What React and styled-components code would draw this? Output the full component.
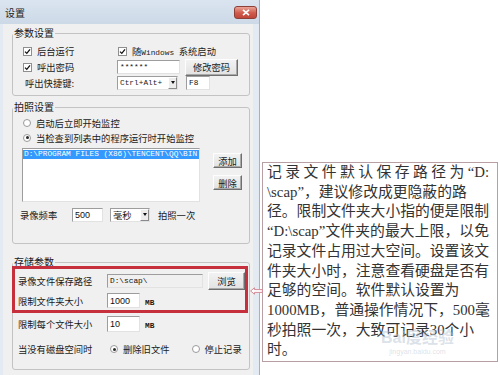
import React from 'react';
import styled, { createGlobalStyle } from 'styled-components';

const Global = createGlobalStyle`
  html, body { margin: 0; padding: 0; background: #fff; }
  body { width: 500px; height: 375px; overflow: hidden; font-family: "Noto Sans CJK SC", sans-serif; }
`;

const Page = styled.div`
  position: relative;
  display: flex;
  align-items: flex-start;
  width: 500px;
  height: 375px;
  background: #fff;
  overflow: hidden;
`;

const Window = styled.div`
  flex: none;
  width: 260px;
  height: 375px;
  box-sizing: border-box;
  display: flex;
  flex-direction: column;
  background: #e3eaf2;
  border-right: 1px solid #8dbad8;
`;

const TitleBar = styled.div`
  height: 24px;
  flex: none;
  display: flex;
  align-items: center;
  justify-content: space-between;
  padding: 0 2px 0 5px;
  background: linear-gradient(#dbe5f0, #ccd9e7);
  font-size: 10px;
  color: #1e1e1e;
`;

const CloseButton = styled.div`
  width: 23px;
  height: 13px;
  box-sizing: border-box;
  border: 1px solid #8e3f38;
  border-radius: 3px;
  background: linear-gradient(#e9a497, #cf5a4a 55%, #c0463a);
  display: flex;
  align-items: center;
  justify-content: center;
`;

const Body = styled.div`
  flex: 1;
  margin: 0 6px 0 3px;
  padding: 0 3px 0 9px;
  background: #f0f0f0;
  display: flex;
  flex-direction: column;
  font-size: 9.3px;
  color: #1a1a1a;
`;

const Group = styled.fieldset`
  margin: ${p => p.$mt}px 0 0;
  padding: 0;
  border: 1px solid #c3c3c3;
  border-radius: 3px;
  min-width: 0;
`;

const Legend = styled.legend`
  margin-left: 0;
  padding: 0 1px;
  font-size: 10px;
  line-height: 12px;
  color: #1a1a1a;
`;

const GroupContent = styled.div`
  position: relative;
  display: flex;
  flex-direction: column;
  padding: ${p => p.$pad};
`;

const Row = styled.div`
  display: flex;
  align-items: center;
  height: ${p => p.$h}px;
  margin-top: ${p => p.$mt || 0}px;
  padding-left: ${p => p.$pl || 0}px;
`;

const Cell = styled.div`
  flex: none;
  width: ${p => p.$w}px;
  display: flex;
  align-items: center;
  white-space: nowrap;
`;

const Option = styled.label`
  display: flex;
  align-items: center;
  gap: 5px;
  white-space: nowrap;
  margin-left: ${p => p.$ml || 0}px;
`;

const Box = styled.span`
  flex: none;
  width: 9px;
  height: 9px;
  box-sizing: border-box;
  border: 1px solid #8e8f8f;
  background: #fff;
  display: flex;
  align-items: center;
  justify-content: center;
`;

const Circle = styled.span`
  flex: none;
  width: 8px;
  height: 8px;
  box-sizing: border-box;
  border: 1px solid #9a9a9a;
  border-radius: 50%;
  background: #fff;
  display: flex;
  align-items: center;
  justify-content: center;
  &::after {
    content: "";
    display: ${p => (p.$on ? 'block' : 'none')};
    width: 3px;
    height: 3px;
    border-radius: 50%;
    background: #2a2a2a;
  }
`;

const Mono = styled.span`
  font-family: "Liberation Mono", monospace;
  font-size: 7.8px;
  font-weight: ${p => (p.$bold ? 700 : 400)};
`;

const Field = styled.div`
  flex: none;
  width: ${p => p.$w}px;
  height: ${p => p.$h || 14}px;
  box-sizing: border-box;
  margin-left: ${p => p.$ml || 0}px;
  padding: 0 2px;
  background: ${p => (p.$ro ? '#f0f0f0' : '#fff')};
  border: 1px solid;
  border-color: #9d9d9d #e2e2e2 #e2e2e2 #9d9d9d;
  display: flex;
  align-items: center;
  overflow: hidden;
  white-space: nowrap;
  font-family: ${p => (p.$mono ? '"Liberation Mono", monospace' : '"Liberation Sans", sans-serif')};
  font-size: ${p => (p.$mono ? '7.8px' : '9px')};
  color: #111;
`;

const Select = styled.div`
  flex: none;
  width: ${p => p.$w}px;
  height: 14px;
  box-sizing: border-box;
  margin-left: ${p => p.$ml || 0}px;
  background: #fff;
  border: 1px solid;
  border-color: #9d9d9d #e2e2e2 #e2e2e2 #9d9d9d;
  display: flex;
  align-items: center;
  justify-content: space-between;
  padding-left: 2px;
  white-space: nowrap;
  font-size: 9.3px;
`;

const SelectArrow = styled.span`
  flex: none;
  width: 9px;
  height: 12px;
  box-sizing: border-box;
  background: #ececec;
  border: 1px solid;
  border-color: #fff #8a8a8a #8a8a8a #fff;
  display: flex;
  align-items: center;
  justify-content: center;
  &::after {
    content: "";
    border-left: 2.5px solid transparent;
    border-right: 2.5px solid transparent;
    border-top: 3px solid #111;
  }
`;

const Button = styled.div`
  flex: none;
  width: ${p => p.$w}px;
  height: ${p => p.$h}px;
  box-sizing: border-box;
  margin-left: ${p => p.$ml || 0}px;
  margin-top: ${p => p.$mt || 0}px;
  background: linear-gradient(#f2f2f2, #e2e2e2);
  border: 1px solid;
  border-color: #fdfdfd #6f6f6f #6f6f6f #fdfdfd;
  box-shadow: inset -1px -1px 0 #a9a9a9;
  display: flex;
  align-items: center;
  justify-content: center;
  font-size: 9.3px;
  color: #1a1a1a;
  white-space: nowrap;
`;

const ListRow = styled.div`
  display: flex;
  align-items: flex-start;
  margin-top: 3px;
  padding-left: 9px;
`;

const ListBox = styled.div`
  flex: none;
  width: 178px;
  height: 54px;
  box-sizing: border-box;
  padding-top: 1px;
  background: #fff;
  border: 1px solid;
  border-color: #9d9d9d #e2e2e2 #e2e2e2 #9d9d9d;
  overflow: hidden;
`;

const ListItem = styled.div`
  height: 9px;
  line-height: 9px;
  background: ${p => (p.$sel ? '#3399ff' : 'transparent')};
  color: ${p => (p.$sel ? '#fff' : '#111')};
  font-family: "Liberation Mono", monospace;
  font-size: 7.8px;
  white-space: nowrap;
  padding-left: 1px;
`;

const ListButtons = styled.div`
  display: flex;
  flex-direction: column;
  margin-left: 13px;
  padding-top: 5px;
  gap: 7px;
`;

const Text = styled.span`
  margin-left: ${p => p.$ml || 0}px;
  white-space: nowrap;
`;

const Highlight = styled.div`
  position: absolute;
  left: -1px;
  top: -2px;
  width: 236px;
  height: 47px;
  box-sizing: border-box;
  border: 3px solid #c6303d;
  pointer-events: none;
`;

const Arrow = styled.svg`
  position: absolute;
  left: 250px;
  top: 287px;
`;

const Note = styled.div`
  position: relative;
  flex: none;
  width: 236px;
  height: 200px;
  box-sizing: border-box;
  margin: 162px 0 0 2px;
  padding: 0 0 0 4px;
  border: 1px solid #b79fa4;
  background: #fff;
  font-family: "Liberation Serif", "Noto Sans CJK SC", serif;
  font-size: 14.8px;
  line-height: 19.7px;
  color: #333;
`;

const NoteLine = styled.div`
  width: 222px;
  white-space: nowrap;
  text-align: left;
  text-align-last: ${p => (p.$justify ? 'justify' : 'left')};
  text-justify: inter-character;
`;

const Watermark = styled.div`
  position: absolute;
  left: 118px;
  top: 166px;
  display: flex;
  flex-direction: column;
  align-items: center;
  color: rgba(175, 190, 205, 0.45);
  font-family: "Liberation Sans", "Noto Sans CJK SC", sans-serif;
  font-size: 16px;
  font-weight: 700;
  line-height: 18px;
  pointer-events: none;
  span { font-size: 7px; font-weight: 400; line-height: 9px; }
`;

function Check() {
  return (
    <Box>
      <svg width="7" height="7" viewBox="0 0 7 7">
        <path d="M1 3.6 L2.8 5.4 L6 1.4" fill="none" stroke="#111" strokeWidth="1.3" />
      </svg>
    </Box>
  );
}

const noteLines = [
  { t: '记录文件默认保存路径为“D:', j: true },
  { t: '\\scap”，建议修改成更隐蔽的路', j: false },
  { t: '径。限制文件夹大小指的便是限制', j: true },
  { t: '“D:\\scap”文件夹的最大上限，以免', j: true },
  { t: '记录文件占用过大空间。设置该文', j: true },
  { t: '件夹大小时，注意查看硬盘是否有', j: true },
  { t: '足够的空间。软件默认设置为', j: false },
  { t: '1000MB，普通操作情况下，500毫', j: true },
  { t: '秒拍照一次，大致可记录30个小', j: false },
  { t: '时。', j: false },
];

export default function App() {
  return (
    <>
      <Global />
      <Page>
        <Window>
          <TitleBar>
            <span>设置</span>
            <CloseButton>
              <svg width="8" height="7" viewBox="0 0 8 7">
                <path d="M1 0.8 L7 6.2 M7 0.8 L1 6.2" stroke="#fff" strokeWidth="1.6" />
              </svg>
            </CloseButton>
          </TitleBar>
          <Body>
            <Group $mt={3}>
              <Legend>参数设置</Legend>
              <GroupContent $pad="4px 0 5px 10px">
                <Row $h={16}>
                  <Cell $w={94}>
                    <Option><Check />后台运行</Option>
                  </Cell>
                  <Option $ml={1}><Check /><span>随<Mono>Windows </Mono>系统启动</span></Option>
                </Row>
                <Row $h={16}>
                  <Cell $w={94}>
                    <Option><Check />呼出密码</Option>
                  </Cell>
                  <Field $w={63} $mono>******</Field>
                  <Button $w={53} $h={17} $ml={5}>修改密码</Button>
                </Row>
                <Row $h={15}>
                  <Cell $w={94}>
                    <Text $ml={2}>呼出快捷键:</Text>
                  </Cell>
                  <Select $w={61}>
                    <Mono>Ctrl+Alt+</Mono>
                    <SelectArrow />
                  </Select>
                  <Field $w={24} $ml={8} $mono>F8</Field>
                </Row>
              </GroupContent>
            </Group>

            <Group $mt={5}>
              <Legend>拍照设置</Legend>
              <GroupContent $pad="2px 0 21px 0">
                <Row $h={15} $pl={10}>
                  <Option><Circle />启动后立即开始监控</Option>
                </Row>
                <Row $h={15} $pl={10}>
                  <Option><Circle $on />当检查到列表中的程序运行时开始监控</Option>
                </Row>
                <ListRow>
                  <ListBox>
                    <ListItem $sel>D:\PROGRAM FILES (X86)\TENCENT\QQ\BIN</ListItem>
                  </ListBox>
                  <ListButtons>
                    <Button $w={29} $h={15}>添加</Button>
                    <Button $w={29} $h={15}>删除</Button>
                  </ListButtons>
                </ListRow>
                <Row $h={15} $mt={5} $pl={7}>
                  <Cell $w={52}>录像频率</Cell>
                  <Field $w={31}>500</Field>
                  <Select $w={40} $ml={7}>
                    毫秒
                    <SelectArrow />
                  </Select>
                  <Text $ml={8}>拍照一次</Text>
                </Row>
              </GroupContent>
            </Group>

            <Group $mt={12}>
              <Legend>存储参数</Legend>
              <GroupContent $pad="3px 0 11px 5px">
                <Row $h={20}>
                  <Cell $w={89}>录像文件保存路径</Cell>
                  <Field $w={96} $ro $mono>D:\scap\</Field>
                  <Button $w={37} $h={18} $ml={5}>浏览</Button>
                </Row>
                <Row $h={17} $mt={1}>
                  <Cell $w={89}>限制文件夹大小</Cell>
                  <Field $w={33} $h={15}>1000</Field>
                  <Text $ml={5}><Mono $bold>MB</Mono></Text>
                </Row>
                <Row $h={17} $mt={6}>
                  <Cell $w={89}>限制每个文件大小</Cell>
                  <Field $w={33} $h={16}>10</Field>
                  <Text $ml={5}><Mono $bold>MB</Mono></Text>
                </Row>
                <Row $h={18} $mt={8}>
                  <Cell $w={89}>当没有磁盘空间时</Cell>
                  <Option $ml={3}><Circle $on />删除旧文件</Option>
                  <Option $ml={22}><Circle />停止记录</Option>
                </Row>
                <Highlight />
              </GroupContent>
            </Group>
          </Body>
        </Window>

        <Note>
          {noteLines.map((l, i) => (
            <NoteLine key={i} $justify={l.j}>{l.t}</NoteLine>
          ))}
          <Watermark>
            Bai度经验
            <span>jingyan.baidu.com</span>
          </Watermark>
        </Note>

        <Arrow width="13" height="8" viewBox="0 0 13 8">
          <path d="M0.6 4 L4.5 0.8 L4.5 2.6 L12.4 2.6 L12.4 5.4 L4.5 5.4 L4.5 7.2 Z" fill="#fff" stroke="#d07f8c" strokeWidth="0.9" />
        </Arrow>
      </Page>
    </>
  );
}
